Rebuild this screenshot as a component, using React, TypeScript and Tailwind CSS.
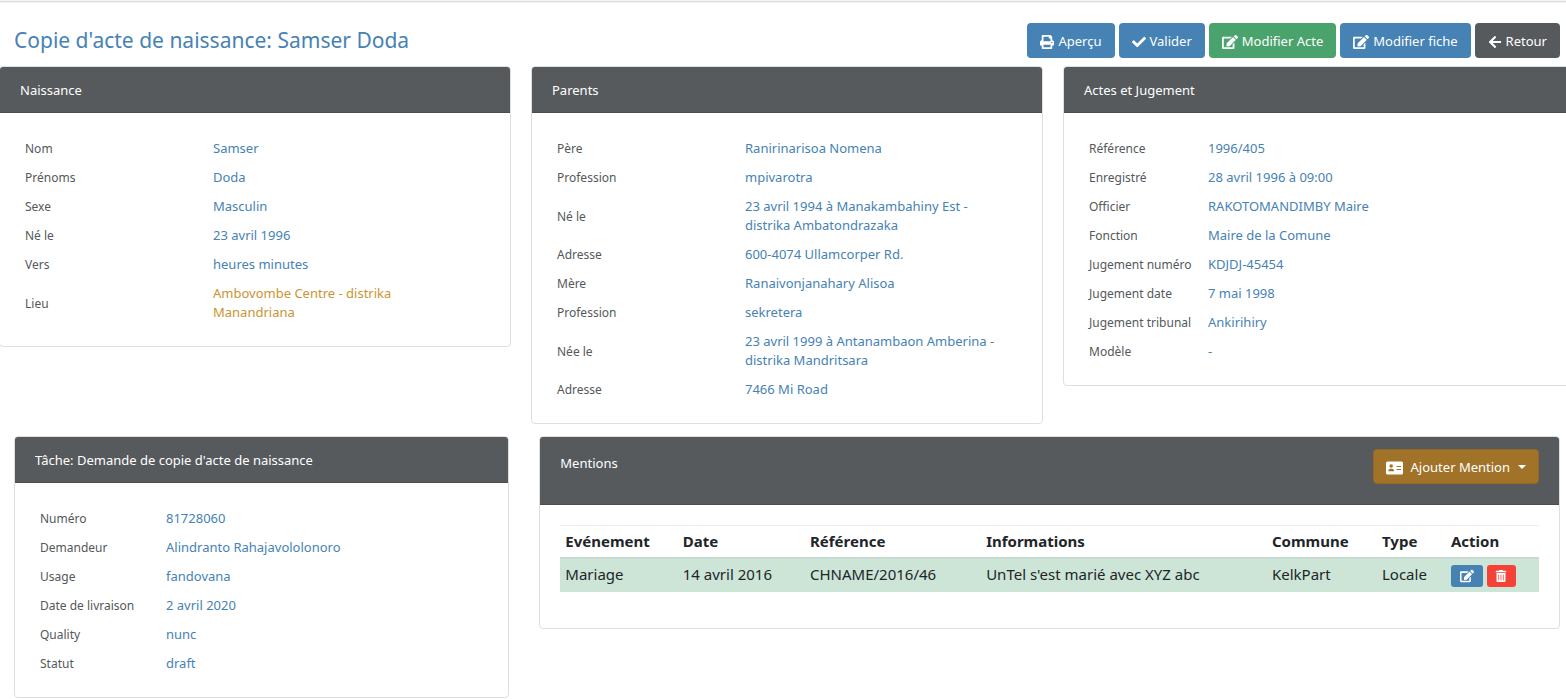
import type { ReactNode } from "react";
import {
  FaArrowLeft,
  FaCheck,
  FaEdit,
  FaPrint,
  FaTrashAlt,
} from "react-icons/fa";

type Field = { label: string; value: string; warn?: boolean };

const naissance: Field[] = [
  { label: "Nom", value: "Samser" },
  { label: "Prénoms", value: "Doda" },
  { label: "Sexe", value: "Masculin" },
  { label: "Né le", value: "23 avril 1996" },
  { label: "Vers", value: "heures minutes" },
  { label: "Lieu", value: "Ambovombe Centre - distrika Manandriana", warn: true },
];

const parents: Field[] = [
  { label: "Père", value: "Ranirinarisoa Nomena" },
  { label: "Profession", value: "mpivarotra" },
  { label: "Né le", value: "23 avril 1994 à Manakambahiny Est - distrika Ambatondrazaka" },
  { label: "Adresse", value: "600-4074 Ullamcorper Rd." },
  { label: "Mère", value: "Ranaivonjanahary Alisoa" },
  { label: "Profession", value: "sekretera" },
  { label: "Née le", value: "23 avril 1999 à Antanambaon Amberina - distrika Mandritsara" },
  { label: "Adresse", value: "7466 Mi Road" },
];

const actes: Field[] = [
  { label: "Référence", value: "1996/405" },
  { label: "Enregistré", value: "28 avril 1996 à 09:00" },
  { label: "Officier", value: "RAKOTOMANDIMBY Maire" },
  { label: "Fonction", value: "Maire de la Comune" },
  { label: "Jugement numéro", value: "KDJDJ-45454" },
  { label: "Jugement date", value: "7 mai 1998" },
  { label: "Jugement tribunal", value: "Ankirihiry" },
  { label: "Modèle", value: "-" },
];

const tache: Field[] = [
  { label: "Numéro", value: "81728060" },
  { label: "Demandeur", value: "Alindranto Rahajavololonoro" },
  { label: "Usage", value: "fandovana" },
  { label: "Date de livraison", value: "2 avril 2020" },
  { label: "Quality", value: "nunc" },
  { label: "Statut", value: "draft" },
];

const cardClass = "overflow-hidden rounded border border-[#dfdfdf] bg-white";

function Card({ title, children }: { title: string; children: ReactNode }) {
  return (
    <section className={cardClass}>
      <h2 className="border-b border-[#4a4d50] bg-[#565a5d] px-5 pt-[13px] pb-[11px] text-[13px] leading-[21px] text-white">
        {title}
      </h2>
      <div className="p-5">{children}</div>
    </section>
  );
}

function FieldTable({ fields, labelWidth }: { fields: Field[]; labelWidth: string }) {
  return (
    <table className="w-full table-fixed text-left">
      <tbody>
        {fields.map((field, index) => (
          <tr key={index}>
            <th
              scope="row"
              className={`${labelWidth} px-[5px] pt-1.5 pb-1 align-middle text-[12px] leading-[19px] font-normal whitespace-nowrap text-[#54585b]`}
            >
              {field.label}
            </th>
            <td
              className={`pt-1.5 pr-5 pb-1 pl-[5px] align-middle text-[13px] leading-[19px] ${
                field.warn ? "text-[#c99432]" : "text-[#4682b4]"
              }`}
            >
              {field.value}
            </td>
          </tr>
        ))}
      </tbody>
    </table>
  );
}

function ActionButton({ icon, color, children }: { icon: ReactNode; color: string; children: ReactNode }) {
  return (
    <button
      type="button"
      className={`flex h-[35px] items-center gap-1 rounded px-[13px] pt-0.5 text-[13px] leading-[19px] whitespace-nowrap text-white ${color}`}
    >
      {icon}
      {children}
    </button>
  );
}

/* Solid identity card: portrait on the left, two text lines on the right. */
function CardIcon() {
  return (
    <svg viewBox="0 0 17 14" className="h-3.5 w-[17px]" aria-hidden="true">
      <rect x="0" y="0.5" width="17" height="13" rx="1.5" fill="#fff" />
      <circle cx="5.2" cy="5" r="1.8" fill="#a07329" />
      <path d="M2.2 10.2c0-1.6 1-2.5 2.2-2.5h1.6c1.2 0 2.2.9 2.2 2.5z" fill="#a07329" />
      <path d="M10.5 5.5H15M10.5 8.5H15" stroke="#a07329" strokeWidth="1" />
    </svg>
  );
}

export default function App() {
  return (
    <div className="overflow-hidden border-t border-[#f4f4f4] bg-white font-['Noto_Sans',sans-serif] text-[#212529]">
      <div className="h-0.5 border-t border-[#dcdcdc] bg-[#f1f1f1]" />

      <header className="flex items-center justify-between pt-5 pr-1.5 pb-2 pl-3.5">
        <h1 className="text-[21px] leading-[35px] text-[#4682b4]">
          Copie d'acte de naissance: Samser Doda
        </h1>
        <div className="flex gap-1">
          <ActionButton color="bg-[#4682b4]" icon={<FaPrint className="size-3.5" />}>
            Aperçu
          </ActionButton>
          <ActionButton color="bg-[#4682b4]" icon={<FaCheck className="size-3.5" />}>
            Valider
          </ActionButton>
          <ActionButton color="bg-[#4aa36d]" icon={<FaEdit className="size-4" />}>
            Modifier Acte
          </ActionButton>
          <ActionButton color="bg-[#4682b4]" icon={<FaEdit className="size-4" />}>
            Modifier fiche
          </ActionButton>
          <ActionButton color="bg-[#565a5d]" icon={<FaArrowLeft className="size-3.5" />}>
            Retour
          </ActionButton>
        </div>
      </header>

      <main className="-mr-[9px] -ml-px">
        <div className="grid grid-cols-3 items-start gap-5">
          <Card title="Naissance">
            <FieldTable fields={naissance} labelWidth="w-2/5" />
          </Card>
          <Card title="Parents">
            <FieldTable fields={parents} labelWidth="w-2/5" />
          </Card>
          <Card title="Actes et Jugement">
            <FieldTable fields={actes} labelWidth="w-[119px]" />
          </Card>
        </div>

        <div className="mt-3 flex items-start">
          <div className="w-1/3 px-[15px]">
            <Card title="Tâche: Demande de copie d'acte de naissance">
              <FieldTable fields={tache} labelWidth="w-[126px]" />
            </Card>
          </div>

          <div className="w-2/3 px-[15px]">
            <section className={cardClass}>
              <div className="flex items-start justify-between border-b border-[#4a4d50] bg-[#565a5d] px-5 pt-3 pb-5">
                <h2 className="pt-1 text-[13px] leading-[21px] text-white">Mentions</h2>
                <button
                  type="button"
                  aria-haspopup="menu"
                  className="flex h-[35px] items-center gap-2 rounded border border-[#946923] bg-[#a07329] px-3 pt-0.5 text-[13px] leading-[19px] whitespace-nowrap text-white"
                >
                  <CardIcon />
                  Ajouter Mention
                  <span className="mb-0.5 border-x-4 border-t-4 border-x-transparent border-t-white" />
                </button>
              </div>
              <div className="px-5 pt-5 pb-9">
                <table className="w-full table-fixed text-left text-[15px] leading-[23px]">
                  <thead>
                    <tr className="border-t border-b-2 border-t-[#ececec] border-b-[#c5dbcf]">
                      <th className="w-[12%] px-[5px] py-1 font-bold">Evénement</th>
                      <th className="w-[13%] px-[5px] py-1 font-bold">Date</th>
                      <th className="w-[18%] px-[5px] py-1 font-bold">Référence</th>
                      <th className="px-[5px] py-1 font-bold">Informations</th>
                      <th className="w-[110px] px-[5px] py-1 font-bold">Commune</th>
                      <th className="w-[69px] px-[5px] py-1 font-bold">Type</th>
                      <th className="w-[93px] px-[5px] py-1 font-bold">Action</th>
                    </tr>
                  </thead>
                  <tbody>
                    <tr className="h-[34px] bg-[#cce5d7] align-top leading-[30px] whitespace-nowrap">
                      <td className="px-[5px]">Mariage</td>
                      <td className="px-[5px]">14 avril 2016</td>
                      <td className="px-[5px]">CHNAME/2016/46</td>
                      <td className="px-[5px]">UnTel s'est marié avec XYZ abc</td>
                      <td className="px-[5px]">KelkPart</td>
                      <td className="px-[5px]">Locale</td>
                      <td className="px-[5px]">
                        <div className="flex gap-1 pt-1.5">
                          <button
                            type="button"
                            aria-label="Modifier"
                            className="flex h-[22px] w-8 items-center justify-center rounded-[3px] bg-[#4682b4] text-white"
                          >
                            <FaEdit className="size-3.5" />
                          </button>
                          <button
                            type="button"
                            aria-label="Supprimer"
                            className="flex h-[22px] w-[29px] items-center justify-center rounded-[3px] bg-[#f44336] text-white"
                          >
                            <FaTrashAlt className="size-3" />
                          </button>
                        </div>
                      </td>
                    </tr>
                  </tbody>
                </table>
              </div>
            </section>
          </div>
        </div>
      </main>
    </div>
  );
}
